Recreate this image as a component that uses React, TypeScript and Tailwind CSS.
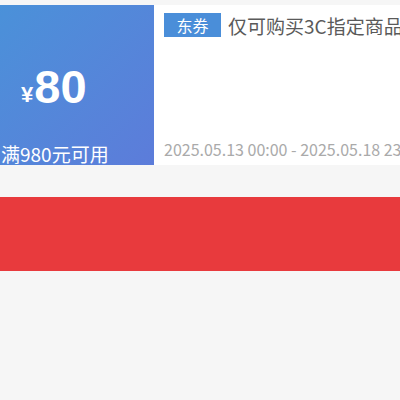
export default function App() {
  return (
    <div
      className="w-[400px] h-[400px] bg-[#f6f6f6] overflow-hidden pt-[5px]"
      style={{ fontFamily: '"Noto Sans CJK SC", "Noto Sans", sans-serif' }}
    >
      {/* Coupon */}
      <div className="flex h-[160px] bg-white">
        <div className="w-[154px] shrink-0 flex flex-col bg-gradient-to-br from-[#4a91d9] to-[#5c7cda] text-white">
          <div className="flex items-end pl-[21px] pt-[58px]" style={{ fontFamily: '"Liberation Sans", sans-serif' }}>
            <span className="text-[22px] font-bold leading-none mb-[4px] mr-[1px]">¥</span>
            <span className="text-[47px] font-bold leading-none">80</span>
          </div>
          <div className="mt-auto text-[19px] leading-none whitespace-nowrap pl-[1px] pb-[2px]">满980元可用</div>
        </div>
        <div className="flex-1 min-w-0 flex flex-col pl-[10px] pt-[8px] pb-[8px] overflow-hidden">
          <div className="flex items-center gap-[7px] whitespace-nowrap">
            <span className="w-[57px] h-[24px] shrink-0 flex items-center justify-center bg-[#4a8ed9] text-white text-[16px] leading-none">
              东券
            </span>
            <span className="text-[19px] leading-none text-[#5a5a5a]">仅可购买3C指定商品使用</span>
          </div>
          <div className="mt-auto text-[16px] leading-none text-[#aaa] whitespace-nowrap">
            2025.05.13 00:00 - 2025.05.18 23:59
          </div>
        </div>
      </div>
      <div className="h-[32px]" />
      <div className="h-[74px] bg-[#e83a3d]" />
    </div>
  );
}
